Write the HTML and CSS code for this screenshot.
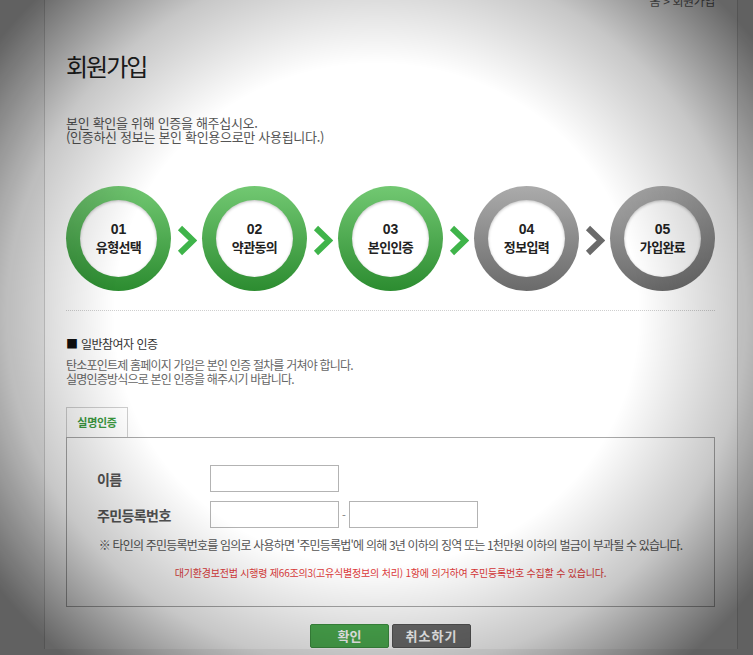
FILE: index.html
```html
<!DOCTYPE html>
<html lang="ko">
<head>
<meta charset="utf-8">
<title>회원가입</title>
<link rel="stylesheet" href="styles.css">
</head>
<body>
<div class="wrap">
  <div class="crumb">홈 &gt; 회원가입</div>
  <h1 class="title">회원가입</h1>
  <p class="intro">본인 확인을 위해 인증을 해주십시오.<br>(인증하신 정보는 본인 확인용으로만 사용됩니다.)</p>

  <div class="steps">
    <div class="step on"><div class="inner"><span class="num">01</span><span class="lbl">유형선택</span></div></div>
    <svg class="arrow" width="20" height="31" viewBox="0 0 20 31"><polyline points="3,3 16,15.5 3,28" fill="none" stroke="#3fb44a" stroke-width="6"/></svg>
    <div class="step on"><div class="inner"><span class="num">02</span><span class="lbl">약관동의</span></div></div>
    <svg class="arrow" width="20" height="31" viewBox="0 0 20 31"><polyline points="3,3 16,15.5 3,28" fill="none" stroke="#3fb44a" stroke-width="6"/></svg>
    <div class="step on"><div class="inner"><span class="num">03</span><span class="lbl">본인인증</span></div></div>
    <svg class="arrow" width="20" height="31" viewBox="0 0 20 31"><polyline points="3,3 16,15.5 3,28" fill="none" stroke="#3fb44a" stroke-width="6"/></svg>
    <div class="step off"><div class="inner"><span class="num">04</span><span class="lbl">정보입력</span></div></div>
    <svg class="arrow" width="20" height="31" viewBox="0 0 20 31"><polyline points="3,3 16,15.5 3,28" fill="none" stroke="#6a6a6a" stroke-width="6"/></svg>
    <div class="step off"><div class="inner"><span class="num">05</span><span class="lbl">가입완료</span></div></div>
  </div>

  <h2 class="sec-title"><span class="sq">■</span> 일반참여자 인증</h2>
  <p class="desc">탄소포인트제 홈페이지 가입은 본인 인증 절차를 거쳐야 합니다.<br>실명인증방식으로 본인 인증을 해주시기 바랍니다.</p>

  <div class="tabs"><span class="tab">실명인증</span></div>
  <div class="box">
    <div class="row">
      <label class="lab">이름</label>
      <input class="field" type="text">
    </div>
    <div class="row">
      <label class="lab">주민등록번호</label>
      <input class="field" type="text"><span class="dash">-</span><input class="field" type="password">
    </div>
    <p class="note">※ 타인의 주민등록번호를 임의로 사용하면 '주민등록법'에 의해 3년 이하의 징역 또는 1천만원 이하의 벌금이 부과될 수 있습니다.</p>
    <p class="law">대기환경보전법 시행령 제66조의3(고유식별정보의 처리) 1항에 의거하여 주민등록번호 수집할 수 있습니다.</p>
  </div>

  <div class="btns">
    <button class="btn ok">확인</button>
    <button class="btn cancel">취소하기</button>
  </div>
</div>
<div class="vignette"></div>
</body>
</html>
```
FILE: styles.css
```css
* { box-sizing: border-box; }
html, body { margin: 0; padding: 0; }
body {
  background: #f2f2f2;
  font-family: "Noto Sans CJK KR", "Noto Sans", sans-serif;
  color: #555;
  height: 655px;
  overflow: hidden;
}
.wrap {
  margin-left: 44px;
  width: 694px;
  min-height: 655px;
  background: #fff;
  border-left: 1px solid #d2d2d2;
  border-right: 1px solid #d2d2d2;
  padding: 0 22px 0 21px;
}
.crumb {
  text-align: right;
  font-size: 12px;
  line-height: 14px;
  margin-top: -6px;
  color: #666;
  letter-spacing: -0.4px;
}
.title {
  margin: 43px 0 0;
  font-size: 24px;
  line-height: 30px;
  font-weight: 400;
  color: #222;
  letter-spacing: -2px;
}
.intro {
  margin: 35px 0 0;
  font-size: 13px;
  line-height: 14px;
  color: #555;
  letter-spacing: -0.3px;
}
.steps {
  margin-top: 42px;
  display: flex;
  justify-content: space-between;
  align-items: center;
  padding-bottom: 19px;
  border-bottom: 1px dotted #cfcfcf;
}
.step {
  width: 105px;
  height: 105px;
  border-radius: 50%;
  padding: 14px;
}
.step.on { background: linear-gradient(#72c872, #2c8c30); }
.step.off { background: linear-gradient(#ababab, #6a6a6a); }
.inner {
  width: 100%;
  height: 100%;
  border-radius: 50%;
  background: #fff;
  box-shadow: inset 0 1px 3px rgba(0,0,0,.25);
  display: flex;
  flex-direction: column;
  align-items: center;
  justify-content: center;
  color: #222;
  font-weight: 700;
  padding-bottom: 2px;
}
.num { font-size: 14px; line-height: 17px; font-family: "Liberation Sans", sans-serif; }
.lbl { font-size: 13px; line-height: 17px; letter-spacing: -0.6px; }
.arrow { display: block; margin-top: 4px; }
.sec-title {
  margin: 25px 0 0;
  font-size: 12px;
  line-height: 16px;
  font-weight: 400;
  color: #333;
  letter-spacing: -0.5px;
}
.sq { color: #111; letter-spacing: 0; }
.desc {
  margin: 6px 0 0;
  font-size: 12px;
  line-height: 14px;
  color: #666;
  letter-spacing: -0.8px;
}
.tabs { margin-top: 21px; display: flex; }
.tab {
  display: block;
  width: 62px;
  height: 30px;
  border: 1px solid #cfcfcf;
  border-bottom: none;
  text-align: center;
  line-height: 29px;
  font-size: 11px;
  font-weight: 700;
  color: #3b9a3f;
  letter-spacing: -0.3px;
}
.box {
  border: 1px solid #a9a9a9;
  height: 170px;
  padding: 27px 0 0 30px;
}
.row { display: flex; align-items: center; height: 27px; margin-bottom: 9px; }
.lab {
  width: 113px;
  font-size: 14px;
  font-weight: 700;
  color: #555;
  letter-spacing: -0.6px;
}
.field {
  width: 129px;
  height: 27px;
  border: 1px solid #b3b3b3;
  margin: 0;
  padding: 0;
  background: #fff;
}
.dash { width: 10px; text-align: center; font-size: 11px; color: #777; }
.note {
  margin: 6px 0 0 -30px;
  text-align: center;
  font-size: 12px;
  line-height: 16px;
  color: #555;
  letter-spacing: -0.8px;
}
.law {
  margin: 13px 0 0 -30px;
  text-align: center;
  font-size: 10px;
  line-height: 14px;
  color: #e03b3b;
  letter-spacing: -0.2px;
}
.btns { margin-top: 17px; display: flex; justify-content: center; gap: 3px; }
.btn {
  width: 79px;
  height: 24px;
  border-radius: 2px;
  font-family: "Noto Sans CJK KR", sans-serif;
  font-size: 13px;
  font-weight: 700;
  color: #fff;
  padding: 0;
  line-height: 22px;
  letter-spacing: 0;
}
.btn.ok { background: #4cad50; border: 1px solid #3d8f40; }
.btn.cancel { background: #6c6c6c; border: 1px solid #555; letter-spacing: 1px; }
.vignette {
  position: fixed;
  inset: 0;
  pointer-events: none;
  background: radial-gradient(ellipse 60% 66% at 50% 48%, rgba(0,0,0,0) 58%, rgba(0,0,0,.22) 82%, rgba(0,0,0,.6) 105%);
}
```
